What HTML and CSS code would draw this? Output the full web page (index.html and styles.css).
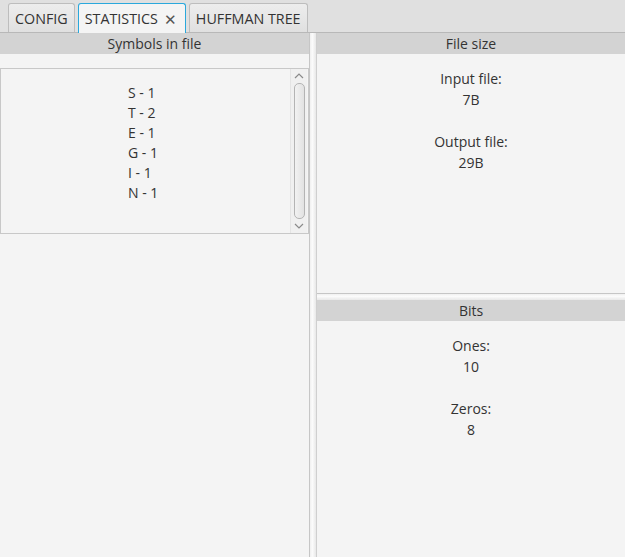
FILE: index.html
```html
<!DOCTYPE html>
<html>
<head>
<meta charset="utf-8">
<link rel="stylesheet" href="styles.css">
</head>
<body>
<div class="app">
  <div class="tabbar">
    <div class="tab">CONFIG</div>
    <div class="tab selected">STATISTICS<span class="close">✕</span></div>
    <div class="tab">HUFFMAN TREE</div>
  </div>
  <div class="main">
    <div class="left">
      <div class="header">Symbols in file</div>
      <div class="list">
        <div class="items">
          <div>S - 1</div>
          <div>T - 2</div>
          <div>E - 1</div>
          <div>G - 1</div>
          <div>I - 1</div>
          <div>N - 1</div>
        </div>
        <div class="scrollbar">
          <svg class="arrow" width="10" height="6" viewBox="0 0 10 6"><path d="M1 5 L5 1 L9 5" fill="none" stroke="#8a8a8a" stroke-width="1.2"/></svg>
          <div class="thumb"></div>
          <svg class="arrow" width="10" height="6" viewBox="0 0 10 6"><path d="M1 1 L5 5 L9 1" fill="none" stroke="#8a8a8a" stroke-width="1.2"/></svg>
        </div>
      </div>
    </div>
    <div class="vdivider"></div>
    <div class="right">
      <div class="pane top">
        <div class="header">File size</div>
        <div class="values">
          <div>Input file:</div>
          <div>7B</div>
          <div class="blank"></div>
          <div>Output file:</div>
          <div>29B</div>
        </div>
      </div>
      <div class="hdivider"></div>
      <div class="pane bottom">
        <div class="header">Bits</div>
        <div class="values">
          <div>Ones:</div>
          <div>10</div>
          <div class="blank"></div>
          <div>Zeros:</div>
          <div>8</div>
        </div>
      </div>
    </div>
  </div>
</div>
</body>
</html>
```

FILE: styles.css
```css
html, body {
  margin: 0;
  padding: 0;
}
body {
  background: #f4f4f4;
  font-family: "Open Sans", "Noto Sans", sans-serif;
  font-size: 14px;
  color: #333333;
  width: 625px;
  height: 557px;
  overflow: hidden;
}
.app {
  display: flex;
  flex-direction: column;
  height: 557px;
}
.tabbar {
  height: 33px;
  box-sizing: border-box;
  background: #e0e0e0;
  border-bottom: 1px solid #b8b8b8;
  display: flex;
  align-items: flex-end;
  padding-left: 8px;
  gap: 3px;
}
.tab {
  height: 29px;
  box-sizing: border-box;
  padding: 0 6px 0 6px;
  display: flex;
  align-items: center;
  background: linear-gradient(#ededed, #e0e0e0);
  border: 1px solid #bdbdbd;
  border-bottom: none;
  border-radius: 3px 3px 0 0;
  font-size: 14.3px;
}
.tab.selected {
  background: #f4f4f4;
  border: 1px solid #2aa8dc;
  border-bottom: none;
  height: 30px;
  margin-bottom: -1px;
  padding: 0 8px 0 6px;
}
.close {
  margin-left: 6px;
  font-size: 15px;
  color: #555;
}
.main {
  flex: 1;
  display: flex;
}
.left {
  width: 309px;
  display: flex;
  flex-direction: column;
}
.header {
  height: 21px;
  background: #d3d3d3;
  text-align: center;
  line-height: 21px;
  font-size: 14px;
}
.list {
  margin-top: 14px;
  height: 166px;
  box-sizing: border-box;
  border: 1px solid #c8c8c8;
  display: flex;
  background: #f4f4f4;
}
.items {
  flex: 1;
  padding-top: 14px;
  padding-left: 127px;
  line-height: 20px;
  font-size: 14px;
}
.scrollbar {
  width: 17px;
  margin-right: 1px;
  background: #f0f0f0;
  border-left: 1px solid #e4e4e4;
  display: flex;
  flex-direction: column;
  align-items: center;
  padding: 4px 0;
  box-sizing: border-box;
}
.arrow {
  display: block;
  flex: none;
}
.thumb {
  flex: 1;
  width: 11px;
  margin: 4px 0;
  box-sizing: border-box;
  border: 1px solid #b4b4b4;
  border-radius: 5px;
  background: linear-gradient(to right, #f2f2f2, #e2e2e2);
}
.vdivider {
  width: 8px;
  box-sizing: border-box;
  border-left: 1px solid #c6c6c6;
  border-right: 1px solid #cfcfcf;
  background: linear-gradient(to right, #f0f0f0, #fbfbfb 40%, #e8e8e8);
}
.right {
  flex: 1;
  display: flex;
  flex-direction: column;
}
.pane.top {
  height: 260px;
}
.pane.bottom {
  flex: 1;
}
.hdivider {
  height: 7px;
  box-sizing: border-box;
  border-top: 1px solid #c6c6c6;
  background: linear-gradient(#f0f0f0, #fbfbfb 40%, #e8e8e8);
}
.values {
  text-align: center;
  padding-top: 14px;
  line-height: 21px;
  font-size: 14px;
}
.blank {
  height: 21px;
}
```
